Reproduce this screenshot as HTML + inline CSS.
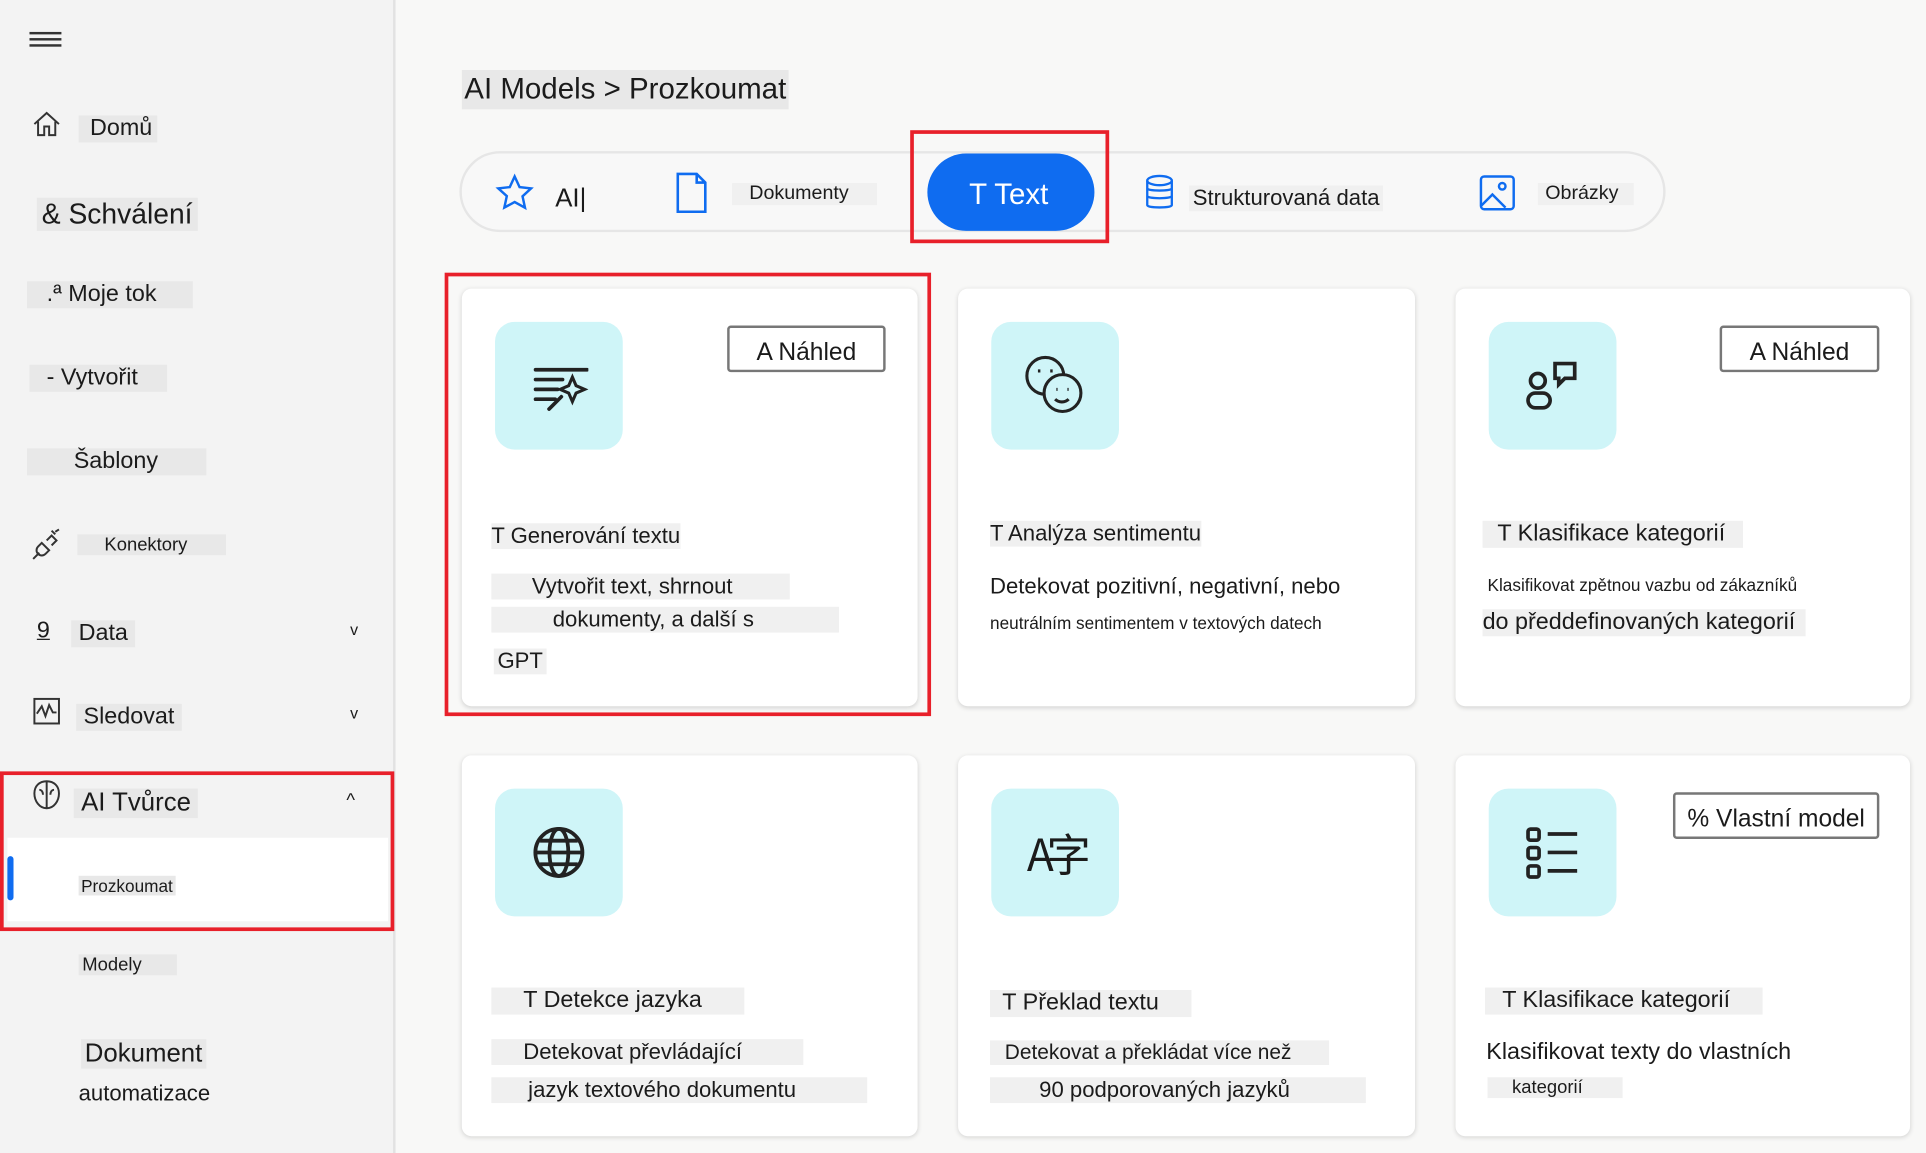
<!DOCTYPE html>
<html><head><meta charset="utf-8"><style>
*{margin:0;padding:0;box-sizing:border-box}
body{width:1926px;height:1153px;overflow:hidden;background:#f8f8f7;font-family:"Liberation Sans","Noto Sans CJK SC",sans-serif;color:#1b1b1b}
#s{position:absolute;left:0;top:0;width:1568px;height:939px;transform:scale(1.22832);transform-origin:0 0}
.a{position:absolute;white-space:nowrap}
div.a{margin-top:3px}
div.a.n{margin-top:0}
.g{background:#e8e8e8}
.l{background:#f0f0f0}
.side{position:absolute;left:0;top:0;width:322px;height:939px;background:#f3f3f3;border-right:2px solid #e2e2e2}
.card{position:absolute;background:#fff;border-radius:8px;box-shadow:0 1px 4px rgba(0,0,0,.15)}
.ic{position:absolute;left:27px;top:27px;width:104px;height:104px;background:#cff5f8;border-radius:16px;display:flex;align-items:center;justify-content:center}
.red{position:absolute;border:3px solid #e8202a}
.badge{position:absolute;border:2px solid #777;border-radius:3px;background:#fff;font-size:20px;text-align:center;padding-top:3px}
</style></head><body><div id="s">
<div class="side"></div>
<div class="a n" style="left:24px;top:26px;width:26px;height:12px;border-top:2px solid #333;border-bottom:2px solid #333"><div style="margin-top:3px;border-top:2px solid #333"></div></div>
<svg class="a" style="left:26px;top:89px" width="24" height="24" viewBox="0 0 24 24" fill="none" stroke="#333" stroke-width="1.6"><path d="M2 12L12 3l10 9M5 10v11h5v-7h4v7h5V10"/></svg>
<div class="a g" style="left:64px;top:91px;padding:0 4px;font-size:19px">&nbsp;Domů</div>
<div class="a g" style="left:30px;top:158px;padding:0 4px;font-size:23px">&amp; Schválení</div>
<div class="a g" style="left:22px;top:226px;width:135px;padding-left:16px;font-size:19px">.ª Moje tok</div>
<div class="a g" style="left:24px;top:294px;width:112px;padding-left:14px;font-size:19px">- Vytvořit</div>
<div class="a g" style="left:22px;top:362px;width:146px;padding-left:38px;font-size:19px">Šablony</div>
<svg class="a" style="left:25px;top:429px" width="28" height="28" viewBox="0 0 28 28" fill="none" stroke="#333" stroke-width="1.6"><path d="M2 26l5-5M9 13l6 6-3 3a4 4 0 01-6-6zM13 11l4-4 4 4-4 4M20 4l3-2M17 3l3 3"/></svg>
<div class="a g" style="left:63px;top:432px;width:121px;padding-left:22px;font-size:15px">Konektory</div>
<div class="a" style="left:30px;top:500px;font-size:19px;text-decoration:underline">9</div>
<div class="a g" style="left:58px;top:502px;padding:0 6px;font-size:19px">Data</div>
<div class="a" style="left:285px;top:502px;font-size:13px">v</div>
<svg class="a" style="left:26px;top:567px" width="24" height="24" viewBox="0 0 24 24" fill="none" stroke="#333" stroke-width="1.6"><rect x="2" y="2" width="20" height="20"/><path d="M4 14l4-6 3 8 3-9 3 6h3"/></svg>
<div class="a g" style="left:62px;top:570px;padding:0 6px;font-size:19px">Sledovat</div>
<div class="a" style="left:285px;top:570px;font-size:13px">v</div>
<div class="a n" style="left:6px;top:682px;width:310px;height:68px;background:#fff"></div>
<div class="a n" style="left:6px;top:697px;width:5px;height:36px;background:#0f6cf0;border-radius:3px"></div>
<svg class="a" style="left:24px;top:633px" width="28" height="28" viewBox="0 0 28 28" fill="none" stroke="#333" stroke-width="1.6"><path d="M14 3v22M14 3c-6 0-10 4-10 10s4 12 10 12M14 3c6 0 10 4 10 10s-4 12-10 12M8 10c2 0 3 2 3 4M20 10c-2 0-3 2-3 4"/></svg>
<div class="a g" style="left:60px;top:639px;padding:0 6px;font-size:21px">AI Tvůrce</div>
<div class="a" style="left:282px;top:640px;font-size:15px">^</div>
<div class="a g" style="left:64px;top:710px;padding:0 2px;font-size:14px">Prozkoumat</div>
<div class="red" style="left:0;top:628px;width:321px;height:130px"></div>
<div class="a g" style="left:64px;top:774px;width:80px;padding-left:3px;font-size:15px">Modely</div>
<div class="a g" style="left:66px;top:843px;padding:0 3px;font-size:21px">Dokument</div>
<div class="a" style="left:64px;top:877px;font-size:18px">automatizace</div>

<div class="a g" style="left:376px;top:54px;padding:2px 2px;font-size:24px">AI Models &gt; Prozkoumat</div>
<div class="a n" style="left:374px;top:123px;width:982px;height:66px;border:2px solid #e6e6e6;border-radius:33px;background:#f8f8f8"></div>
<svg class="a" style="left:402px;top:141px" width="34" height="32" viewBox="0 0 24 24" fill="none" stroke="#0f6cf0" stroke-width="1.5"><path d="M12 2l3 6.5 7 .8-5.2 4.8 1.5 7L12 17.6 5.7 21l1.5-7L2 9.3l7-.8z"/></svg>
<div class="a" style="left:452px;top:147px;font-size:21px">AI|</div>
<svg class="a" style="left:549px;top:140px" width="28" height="34" viewBox="0 0 20 24" fill="none" stroke="#0f6cf0" stroke-width="1.5"><path d="M2 1h11l5 5v17H2zM13 1v5h5"/></svg>
<div class="a l" style="left:596px;top:146px;width:118px;padding-left:14px;font-size:16px">Dokumenty</div>
<div class="a n" style="left:755px;top:125px;width:136px;height:63px;background:#0f6cf0;border-radius:32px;color:#fff;font-size:24px;line-height:68px;padding-left:34px">T Text</div>
<div class="red" style="left:741px;top:106px;width:162px;height:92px"></div>
<svg class="a" style="left:931px;top:142px" width="26" height="30" viewBox="0 0 20 24" fill="none" stroke="#0f6cf0" stroke-width="1.5"><ellipse cx="10" cy="4" rx="8" ry="3"/><path d="M2 4v16c0 2 16 2 16 0V4M2 9c0 2 16 2 16 0M2 14c0 2 16 2 16 0"/></svg>
<div class="a l" style="left:968px;top:148px;padding:0 3px;font-size:18px">Strukturovaná data</div>
<svg class="a" style="left:1203px;top:141px" width="32" height="32" viewBox="0 0 24 24" fill="none" stroke="#0f6cf0" stroke-width="1.5"><rect x="2" y="2" width="20" height="20" rx="2"/><circle cx="15" cy="8" r="2"/><path d="M2 20l7-7 8 8"/></svg>
<div class="a l" style="left:1252px;top:146px;width:78px;padding-left:6px;font-size:16px">Obrázky</div>

<div class="card" style="left:376px;top:235px;width:371px;height:340px">
<div class="ic"><svg width="48" height="48" viewBox="0 0 48 48" fill="none" stroke="#222" stroke-width="3" stroke-linecap="round"><path d="M5 11h42M5 19h22M5 27h18M5 35h16M16 43l10-10"/><path d="M35 17l3 7 7 3-7 3-3 7-3-7-7-3 7-3z" stroke-width="2.5"/></svg></div>
<div class="badge" style="left:216px;top:30px;width:129px;height:38px;line-height:34px">A Náhled</div>
<div class="a l" style="left:24px;top:188px;font-size:18px">T Generování textu</div>
<div class="a l" style="left:24px;top:229px;width:243px;padding-left:33px;font-size:18px">Vytvořit text, shrnout</div>
<div class="a l" style="left:24px;top:256px;width:283px;padding-left:50px;font-size:18px">dokumenty, a další s</div>
<div class="a l" style="left:26px;top:290px;padding:0 3px;font-size:18px">GPT</div>
</div>
<div class="red" style="left:362px;top:222px;width:396px;height:361px"></div>

<div class="card" style="left:780px;top:235px;width:372px;height:340px">
<div class="ic"><svg width="60" height="60" viewBox="0 0 60 60" fill="none" stroke="#222" stroke-width="2.5"><circle cx="22" cy="22" r="15"/><circle cx="36" cy="36" r="15" fill="#cff5f8"/><path d="M16 18h2M26 18h2M31 33h1M40 33h1M30 41c3 3 8 3 11 0"/></svg></div>
<div class="a l" style="left:26px;top:186px;font-size:18px">T Analýza sentimentu</div>
<div class="a" style="left:26px;top:229px;font-size:18px">Detekovat pozitivní, negativní, nebo</div>
<div class="a" style="left:26px;top:261px;font-size:14px">neutrálním sentimentem v textových datech</div>
</div>

<div class="card" style="left:1185px;top:235px;width:370px;height:340px">
<div class="ic"><svg width="48" height="48" viewBox="0 0 48 48" fill="none" stroke="#222" stroke-width="3"><circle cx="12" cy="20" r="6"/><rect x="4" y="30" width="18" height="12" rx="6"/><path d="M26 6h16v12H34l-5 5v-5h-3z"/></svg></div>
<div class="badge" style="left:215px;top:30px;width:130px;height:38px;line-height:34px">A Náhled</div>
<div class="a l" style="left:22px;top:186px;padding:0 14px 0 12px;font-size:19px">T Klasifikace kategorií</div>
<div class="a" style="left:26px;top:230px;font-size:14px">Klasifikovat zpětnou vazbu od zákazníků</div>
<div class="a l" style="left:22px;top:258px;padding-right:8px;font-size:19px">do předdefinovaných kategorií</div>
</div>

<div class="card" style="left:376px;top:615px;width:371px;height:310px">
<div class="ic"><svg width="46" height="46" viewBox="0 0 24 24" fill="none" stroke="#222" stroke-width="1.6"><circle cx="12" cy="12" r="10"/><ellipse cx="12" cy="12" rx="4" ry="10"/><path d="M2 12h20M4 7h16M4 17h16"/></svg></div>
<div class="a l" style="left:24px;top:186px;width:206px;padding-left:26px;font-size:19px">T Detekce jazyka</div>
<div class="a l" style="left:24px;top:228px;width:254px;padding-left:26px;font-size:18px">Detekovat převládající</div>
<div class="a l" style="left:24px;top:259px;width:306px;padding-left:30px;font-size:18px">jazyk textového dokumentu</div>
</div>

<div class="card" style="left:780px;top:615px;width:372px;height:310px">
<div class="ic"><span style="font-size:36px;font-family:'Noto Sans CJK SC',sans-serif;letter-spacing:-6px">A字</span></div>
<div class="a l" style="left:26px;top:188px;width:164px;padding-left:10px;font-size:19px">T Překlad textu</div>
<div class="a l" style="left:26px;top:229px;width:276px;padding-left:12px;font-size:17px">Detekovat a překládat více než</div>
<div class="a l" style="left:26px;top:259px;width:306px;padding-left:40px;font-size:18px">90 podporovaných jazyků</div>
</div>

<div class="card" style="left:1185px;top:615px;width:370px;height:310px">
<div class="ic"><svg width="48" height="48" viewBox="0 0 48 48" fill="none" stroke="#222" stroke-width="3"><rect x="4" y="5" width="9" height="9" rx="2"/><rect x="4" y="20" width="9" height="9" rx="2"/><rect x="4" y="35" width="9" height="9" rx="2"/><path d="M20 9h24M20 24h24M20 39h24"/></svg></div>
<div class="badge" style="left:177px;top:30px;width:168px;height:38px;line-height:34px">% Vlastní model</div>
<div class="a l" style="left:24px;top:186px;width:226px;padding-left:14px;font-size:19px">T Klasifikace kategorií</div>
<div class="a" style="left:25px;top:228px;font-size:19px">Klasifikovat texty do vlastních</div>
<div class="a l" style="left:26px;top:259px;width:110px;padding-left:20px;font-size:15px">kategorií</div>
</div>
</div></body></html>
